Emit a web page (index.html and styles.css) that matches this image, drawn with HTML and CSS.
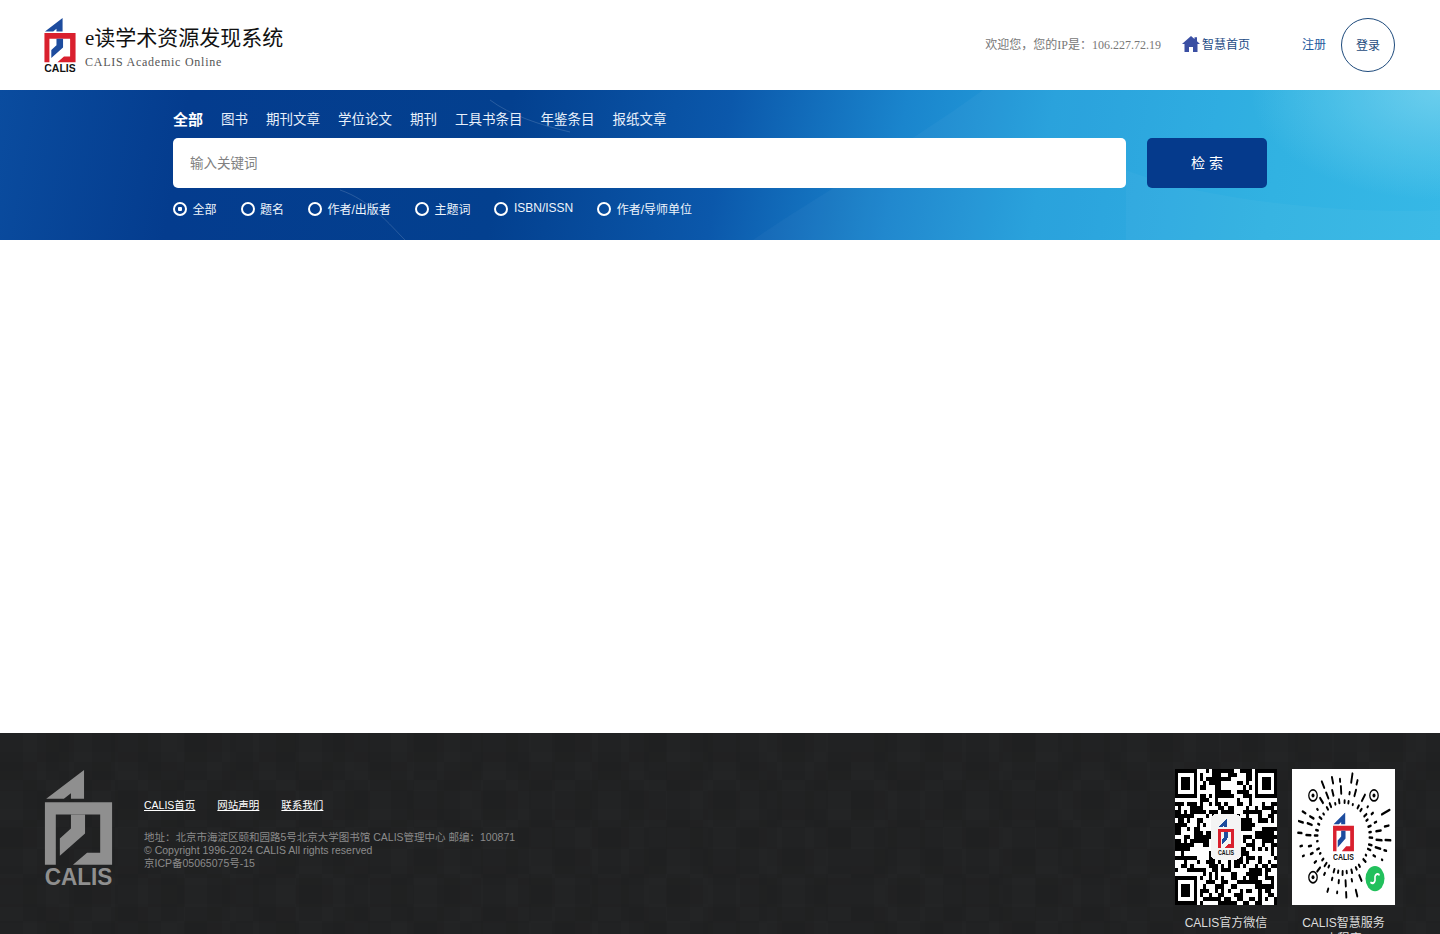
FILE: index.html
```html
<!DOCTYPE html>
<html lang="zh-CN">
<head>
    <meta charset="UTF-8">
    <meta name="viewport" content="width=device-width, initial-scale=1.0">
    <title>e读学术资源发现系统</title>
    <link rel="stylesheet" href="styles.css">
</head>
<body>
    <!-- CALIS mark, colours come from --mark-top / --mark-frame / --mark-text -->
    <svg class="defs" width="0" height="0" aria-hidden="true">
        <symbol id="calis-mark" viewBox="0 0 67 117">
            <path fill="var(--mark-top)" d="M39 0 1.5 28.5H19L26 23v5.500H39z"/>
            <path fill="var(--mark-frame)" fill-rule="evenodd" d="M0 32H67V94H28L42 82H55V44H11V94H0z"/>
            <path fill="var(--mark-top)" d="M26 44H40V63L15 85V68L26 58z"/>
            <text x="33.500" y="114" text-anchor="middle" textLength="67" lengthAdjust="spacingAndGlyphs" class="mark-text">CALIS</text>
        </symbol>
    </svg>

    <div class="page">
        <header class="site-header">
            <div class="brand">
                <svg class="brand-logo logo-color" viewBox="0 0 67 117"><use href="#calis-mark"/></svg>
                <div class="brand-text">
                    <div class="brand-title">e读学术资源发现系统</div>
                    <div class="brand-sub">CALIS Academic Online</div>
                </div>
            </div>
            <div class="user-bar">
                <span class="welcome">欢迎您，您的IP是：106.227.72.19</span>
                <a class="home-link" href="#">
                    <svg class="home-icon" viewBox="0 0 18 16"><path d="M9 0 0 8h2.500v8H7v-5h4v5h4.500V8H18l-3-2.700V1.200h-2.500v1.900z"/></svg>
                    智慧首页
                </a>
                <a class="register" href="#">注册</a>
                <a class="login" href="#">登录</a>
            </div>
        </header>

        <section class="search-band">
            <nav class="tabs">
                <a class="tab active" href="#">全部</a>
                <a class="tab" href="#">图书</a>
                <a class="tab" href="#">期刊文章</a>
                <a class="tab" href="#">学位论文</a>
                <a class="tab" href="#">期刊</a>
                <a class="tab" href="#">工具书条目</a>
                <a class="tab" href="#">年鉴条目</a>
                <a class="tab" href="#">报纸文章</a>
            </nav>
            <form class="search-row">
                <input class="search-input" type="text" placeholder="输入关键词">
                <button class="search-btn" type="button">检 索</button>
            </form>
            <div class="fields">
                <label class="field"><input type="radio" name="field" checked>全部</label>
                <label class="field"><input type="radio" name="field">题名</label>
                <label class="field"><input type="radio" name="field">作者/出版者</label>
                <label class="field"><input type="radio" name="field">主题词</label>
                <label class="field"><input type="radio" name="field">ISBN/ISSN</label>
                <label class="field"><input type="radio" name="field">作者/导师单位</label>
            </div>
        </section>

        <main class="content"></main>

        <footer class="site-footer">
            <svg class="footer-logo logo-gray" viewBox="0 0 67 117"><use href="#calis-mark"/></svg>
            <div class="footer-info">
                <div class="footer-links">
                    <a href="#">CALIS首页</a>
                    <a href="#">网站声明</a>
                    <a href="#">联系我们</a>
                </div>
                <p class="footer-copy">地址：北京市海淀区颐和园路5号北京大学图书馆 CALIS管理中心 邮编：100871<br>© Copyright 1996-2024 CALIS All rights reserved<br>京ICP备05065075号-15</p>
            </div>
            <div class="codes">
                <figure class="code">
                    <svg id="qr-wechat" class="code-img logo-color" viewBox="0 0 33 33" preserveAspectRatio="none" shape-rendering="crispEdges"></svg>
                    <figcaption>CALIS官方微信</figcaption>
                </figure>
                <figure class="code">
                    <svg id="qr-mini" class="code-img logo-color" viewBox="0 0 103 103" preserveAspectRatio="none"></svg>
                    <figcaption>CALIS智慧服务<br>小程序</figcaption>
                </figure>
            </div>
        </footer>
    </div>
    <script src="qr.js"></script>
</body>
</html>
```

FILE: styles.css
```css
* {
    box-sizing: border-box;
}
html, body {
    margin: 0;
    height: 100%;
}
body {
    font-family: "Liberation Sans", "Noto Sans CJK SC", sans-serif;
    background-color: #fff;
}
a {
    text-decoration: none;
}
.defs {
    position: absolute;
}
.page {
    height: 100vh;
    display: flex;
    flex-direction: column;
    overflow: hidden;
}
.logo-color {
    --mark-top: #1d4c9e;
    --mark-frame: #d9202e;
    --mark-text: #111;
}
.logo-gray {
    --mark-top: #8f8f8f;
    --mark-frame: #8f8f8f;
    --mark-text: #8f8f8f;
}
.mark-text {
    font-family: "Liberation Sans", sans-serif;
    font-weight: bold;
    font-size: 24px;
    fill: var(--mark-text);
}

/* header */
.site-header {
    height: 90px;
    flex: none;
    display: flex;
    justify-content: space-between;
    align-items: center;
    padding: 0 45px 0 44px;
}
.brand {
    display: flex;
    align-items: center;
    gap: 9px;
}
.brand-logo {
    width: 32px;
    height: 55px;
    margin-top: 1px;
}
.brand-text {
    padding-top: 5px;
}
.brand-title {
    font-family: "Liberation Serif", "Noto Sans CJK SC", serif;
    font-size: 21px;
    line-height: 26px;
    color: #111;
}
.brand-sub {
    font-family: "Liberation Serif", "Noto Sans CJK SC", serif;
    font-size: 12px;
    line-height: 16px;
    margin-top: 3px;
    letter-spacing: .75px;
    color: #555;
}
.user-bar {
    display: flex;
    align-items: center;
    font-size: 12px;
}
.welcome {
    font-family: "Liberation Serif", "Noto Sans CJK SC", serif;
    color: #777;
    margin-top: -2px;
}
.home-link {
    display: flex;
    align-items: center;
    gap: 2px;
    margin-left: 21px;
    color: #1d4c86;
    margin-top: -3px;
}
.home-icon {
    width: 18px;
    height: 16px;
    fill: #3a4fa3;
}
.register {
    margin-left: 52px;
    color: #1d5a9e;
    margin-top: -3px;
}
.login {
    width: 54px;
    height: 54px;
    margin-left: 15px;
    padding-bottom: 2px;
    border: 1px solid #1d4a7c;
    border-radius: 50%;
    display: flex;
    align-items: center;
    justify-content: center;
    color: #1d4a7c;
}

/* search band */
.search-band {
    height: 150px;
    flex: none;
    padding: 18px 0 0 173px;
    background-color: #0a4595;
    background-image:
        url("data:image/svg+xml,%3Csvg xmlns='http://www.w3.org/2000/svg' width='1440' height='150'%3E%3Cpath d='M983 0C900 60 810 110 753 150H1440V0z' fill='%23fff' fill-opacity='.03'/%3E%3Cpath d='M1126 80C1200 110 1350 125 1440 120V150H1126z' fill='%23fff' fill-opacity='.03'/%3E%3Cpath d='M340 100C370 110 390 135 405 150M490 10C510 25 540 35 570 42' fill='none' stroke='%23fff' stroke-opacity='.15'/%3E%3C/svg%3E"),
        radial-gradient(ellipse 190px 110px at 100% 0, rgba(125, 215, 240, .7), rgba(125, 215, 240, 0)),
        linear-gradient(100deg, #0a4c9f 0, #043c8e 13%, #03408f 35%, #0b58ab 50%, #1a85cd 62%, #249fdb 72%, #2bb0e2 88%, #30b6e6 100%);
}
.tabs {
    display: flex;
    align-items: center;
    gap: 18px;
    height: 20px;
}
.tab {
    font-size: 13.500px;
    color: #e8f0fa;
}
.tab.active {
    font-size: 15px;
    font-weight: bold;
    color: #fff;
}
.search-row {
    display: flex;
    gap: 21px;
    margin-top: 10px;
}
.search-input {
    width: 953px;
    height: 50px;
    padding: 0 17px;
    border: none;
    border-radius: 5px;
    background-color: #fff;
    font-family: inherit;
    font-size: 13.500px;
}
.search-input::placeholder {
    color: #808080;
    opacity: 1;
}
.search-btn {
    width: 120px;
    height: 50px;
    padding: 0 0 3px;
    border: none;
    border-radius: 5px;
    background-color: #053a8c;
    color: #fff;
    font-family: inherit;
    font-size: 14px;
    cursor: pointer;
}
.fields {
    display: flex;
    gap: 24px;
    margin-top: 11px;
}
.field {
    display: flex;
    align-items: center;
    gap: 5.500px;
    height: 18px;
    font-size: 12px;
    color: #eef4fb;
}
.field input {
    appearance: none;
    width: 14px;
    height: 14px;
    margin: 2px 0 0;
    border: 2px solid #fff;
    border-radius: 50%;
    background: transparent;
}
.field input:checked {
    background: radial-gradient(circle, #fff 0 2px, transparent 2.500px);
}

.content {
    flex: 1;
}

/* footer */
.site-footer {
    height: 201px;
    flex: none;
    display: flex;
    align-items: flex-start;
    padding: 36px 45px 0 44px;
    background-color: #212223;
    background-image:
        conic-gradient(rgba(0, 0, 0, .045) 25%, transparent 0 50%, rgba(0, 0, 0, .045) 0 75%, transparent 0),
        conic-gradient(rgba(255, 255, 255, .008) 25%, transparent 0 50%, rgba(255, 255, 255, .008) 0 75%, transparent 0),
        conic-gradient(rgba(0, 0, 0, .03) 25%, transparent 0 50%, rgba(0, 0, 0, .03) 0 75%, transparent 0);
    background-size: 74px 58px, 46px 94px, 118px 38px;
}
.footer-logo {
    width: 69px;
    height: 118px;
    flex: none;
    margin-top: 1px;
}
.footer-info {
    margin-left: 31px;
    padding-top: 30px;
    flex: 1;
}
.footer-links {
    display: flex;
    gap: 22px;
    font-size: 10.500px;
    line-height: 13px;
}
.footer-links a {
    color: #fff;
    text-decoration: underline;
}
.footer-copy {
    margin: 19px 0 0;
    font-size: 10.500px;
    line-height: 13px;
    color: #8b8b8b;
}
.codes {
    display: flex;
    gap: 15px;
}
.code {
    margin: 0;
    width: 102px;
    text-align: center;
    font-size: 12px;
    line-height: 16px;
    color: #ddd;
}
.code:last-child {
    width: 103px;
}
.code-img {
    display: block;
    width: 100%;
    height: 136px;
    background-color: #fff;
}
.code figcaption {
    margin-top: 10px;
}
```

FILE: qr.js
```js
// Draws the two scan codes. No real payload, just the look of them.
const SVG_NS = 'http://www.w3.org/2000/svg';

function random(seed) {
    let s = seed;
    return function() {
        s = (s * 1664525 + 1013904223) % 4294967296;
        return s / 4294967296;
    };
}

function add(svg, tag, attrs) {
    const el = document.createElementNS(SVG_NS, tag);
    Object.keys(attrs).forEach(key => el.setAttribute(key, attrs[key]));
    svg.appendChild(el);
    return el;
}

function drawWechat(svg) {
    const size = 33;
    const rnd = random(20);
    const inFinder = (x, y) => (x < 8 && y < 8) || (x > size - 9 && y < 8) || (x < 8 && y > size - 9);
    let d = '';
    for (let y = 0; y < size; y++) {
        for (let x = 0; x < size; x++) {
            if (!inFinder(x, y) && rnd() > 0.48) {
                d += `M${x} ${y}h1v1h-1z`;
            }
        }
    }
    [[0, 0], [size - 7, 0], [0, size - 7]].forEach(([x, y]) => {
        d += `M${x} ${y}h7v7h-7zM${x + 1} ${y + 1}v5h5v-5zM${x + 2} ${y + 2}h3v3h-3z`;
    });
    add(svg, 'path', { d: d, 'fill-rule': 'evenodd', fill: '#000' });
    add(svg, 'rect', { x: 11.500, y: 11, width: 10, height: 11, rx: 1.500, fill: '#f4f4f4' });
    add(svg, 'use', { href: '#calis-mark', x: 13, y: 12, width: 7, height: 9 });
}

function drawMini(svg) {
    const cx = 51.500;
    const cy = 51.500;
    const rnd = random(7);
    const eyes = [[21, 20], [82, 20], [21, 82]];
    const green = [83, 83];
    const near = (x, y, p, r) => Math.hypot(x - p[0], y - p[1]) < r;
    const rings = [[26, 2.500, 36], [33, 5, 30], [42, 8, 30]];

    rings.forEach(([radius, maxLen, count]) => {
        for (let i = 0; i < count; i++) {
            const a = (i + rnd() * 0.4) / count * Math.PI * 2;
            const len = 0.5 + rnd() * maxLen;
            const x1 = cx + Math.cos(a) * radius;
            const y1 = cy + Math.sin(a) * radius;
            const x2 = cx + Math.cos(a) * (radius + len);
            const y2 = cy + Math.sin(a) * (radius + len);
            if (eyes.some(p => near(x1, y1, p, 10)) || near(x1, y1, green, 14)) {
                continue;
            }
            add(svg, 'line', { x1: x1, y1: y1, x2: x2, y2: y2, stroke: '#000', 'stroke-width': 1.900, 'stroke-linecap': 'round' });
        }
    });
    eyes.forEach(([x, y]) => {
        add(svg, 'circle', { cx: x, cy: y, r: 4.200, fill: 'none', stroke: '#000', 'stroke-width': 1.300 });
        add(svg, 'circle', { cx: x, cy: y, r: 1.500, fill: '#000' });
    });
    add(svg, 'circle', { cx: green[0], cy: green[1], r: 9.500, fill: '#22c05c' });
    add(svg, 'path', { d: 'M79 86a2.600 2.600 0 0 0 4-1.500v-3a2.600 2.600 0 0 1 4-1.500', fill: 'none', stroke: '#fff', 'stroke-width': 1.600, 'stroke-linecap': 'round' });
    add(svg, 'use', { href: '#calis-mark', x: 41, y: 33, width: 21, height: 36.500 });
}

drawWechat(document.getElementById('qr-wechat'));
drawMini(document.getElementById('qr-mini'));
```
